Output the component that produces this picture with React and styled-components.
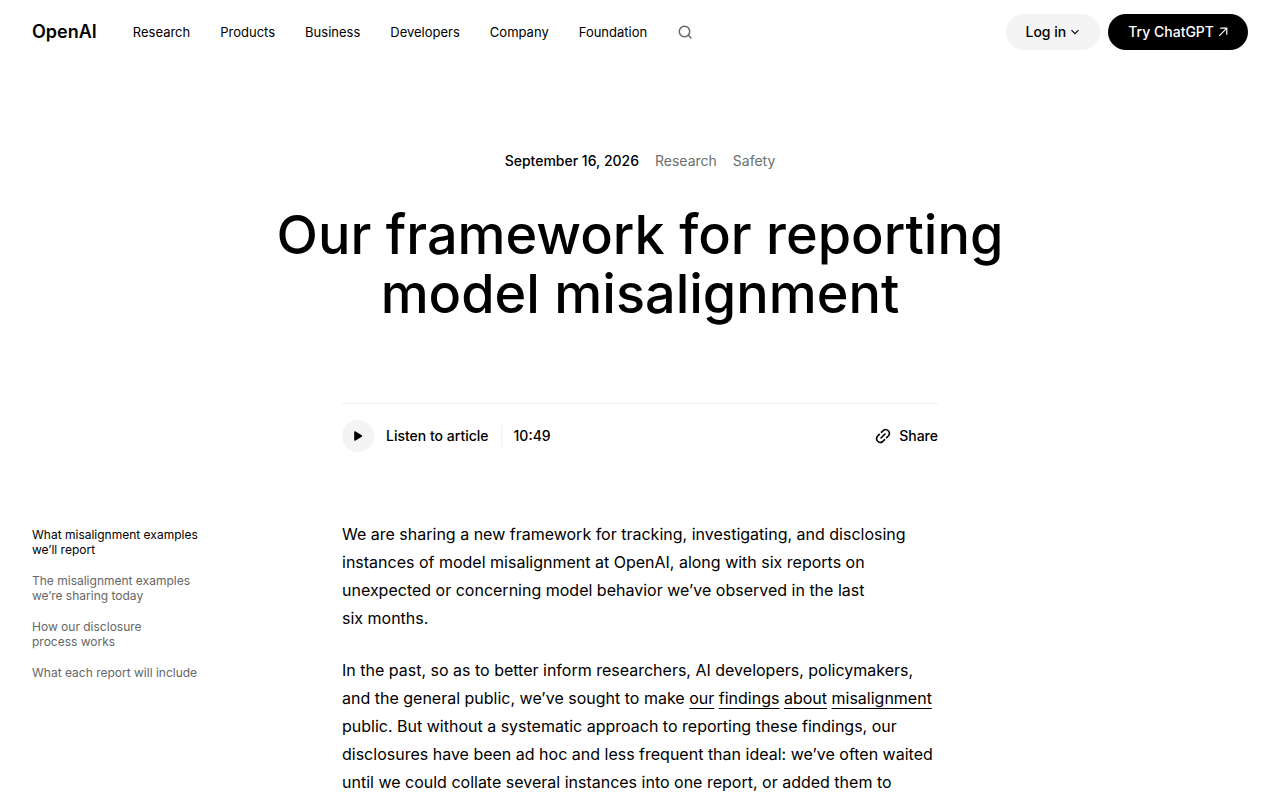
import styled, { createGlobalStyle } from "styled-components";

const GlobalStyle = createGlobalStyle`
  * {
    box-sizing: border-box;
    margin: 0;
    padding: 0;
  }

  body {
    background-color: #fff;
    color: #000;
    font-family: Inter, "Liberation Sans", sans-serif;
  }

  a {
    color: inherit;
    text-decoration: none;
  }

  button {
    border: none;
    background: none;
    color: inherit;
    font: inherit;
    cursor: pointer;
  }
`;

const Header = styled.header`
  display: flex;
  align-items: center;
  height: 64px;
  padding: 0 32px;
`;

const Logo = styled.a`
  margin-right: 36px;
  font-size: 18px;
  line-height: 24px;
  font-weight: 600;
`;

const Nav = styled.nav`
  display: flex;
  align-items: center;
  gap: 30px;
  font-size: 13px;
  line-height: 20px;
`;

const SearchButton = styled.button`
  display: flex;
  color: #666;
`;

const Actions = styled.div`
  display: flex;
  gap: 8px;
  margin-left: auto;
`;

const Pill = styled.button`
  display: flex;
  align-items: center;
  gap: 4px;
  height: 36px;
  padding: 0 20px;
  border-radius: 18px;
  background-color: ${({ $dark }) => ($dark ? "#000" : "#f4f4f4")};
  color: ${({ $dark }) => ($dark ? "#fff" : "#000")};
  font-size: 14px;
  line-height: 20px;
  font-weight: 500;
`;

const Hero = styled.section`
  display: flex;
  flex-direction: column;
  align-items: center;
  gap: 34px;
  padding: 87px 32px 80px;
  text-align: center;
`;

const Meta = styled.div`
  display: flex;
  gap: 16px;
  font-size: 14px;
  line-height: 20px;

  & time {
    font-weight: 500;
  }

  & a {
    color: #6b706b;
  }
`;

const Title = styled.h1`
  max-width: 800px;
  font-size: 54px;
  line-height: 59px;
  font-weight: 500;
  text-wrap: balance;
`;

const Columns = styled.div`
  display: grid;
  grid-template-columns: minmax(0, 1fr) minmax(0, 596px) minmax(0, 1fr);
  padding: 0 32px;
`;

const Player = styled.div`
  grid-column: 2;
  display: flex;
  align-items: center;
  justify-content: space-between;
  height: 65px;
  margin-bottom: 52px;
  border-top: 1px solid #f1f1f1;
  font-size: 14px;
  line-height: 20px;
  font-weight: 500;
`;

const Listen = styled.button`
  display: flex;
  align-items: center;
  gap: 12px;
`;

const PlayCircle = styled.span`
  display: flex;
  align-items: center;
  justify-content: center;
  width: 32px;
  height: 32px;
  border-radius: 50%;
  background-color: #f4f4f4;
`;

const Duration = styled.span`
  padding-left: 12px;
  border-left: 1px solid #f1f1f1;
`;

const Share = styled.button`
  display: flex;
  align-items: center;
  gap: 8px;
`;

const Toc = styled.nav`
  grid-column: 1;
  display: flex;
  flex-direction: column;
  gap: 16px;
  max-width: 180px;
  padding-top: 7px;
  font-size: 12px;
  line-height: 15px;
`;

const TocLink = styled.a`
  color: ${({ $active }) => ($active ? "#000" : "#666")};
`;

const Article = styled.article`
  display: flex;
  flex-direction: column;
  gap: 24px;
  font-size: 16px;
  line-height: 28px;

  & a {
    text-decoration: underline;
    text-decoration-thickness: 1px;
    text-underline-offset: 4px;
    text-decoration-skip-ink: none;
  }
`;

const navItems = ["Research", "Products", "Business", "Developers", "Company", "Foundation"];

const App = () => {
  return (
    <>
      <GlobalStyle />
      <Header>
        <Logo href="#">OpenAI</Logo>
        <Nav>
          {navItems.map((item) => (
            <a href="#" key={item}>{item}</a>
          ))}
          <SearchButton aria-label="Search">
            <svg width="16" height="16" viewBox="0 0 16 16" fill="none" stroke="currentColor" strokeWidth="1.5">
              <circle cx="7.5" cy="7.5" r="5.2" />
              <path d="M11.3 11.3 14 14" strokeLinecap="round" />
            </svg>
          </SearchButton>
        </Nav>
        <Actions>
          <Pill>
            Log in
            <svg width="10" height="10" viewBox="0 0 10 10" fill="none" stroke="currentColor" strokeWidth="1.1">
              <path d="M1.5 3.2 5 6.7l3.5-3.5" />
            </svg>
          </Pill>
          <Pill as="a" href="#" $dark>
            Try ChatGPT
            <svg width="10" height="10" viewBox="0 0 10 10" fill="none" stroke="currentColor" strokeWidth="1.2">
              <path d="M1.2 8.8 8.6 1.4M2.2 1.2h6.6v6.6" />
            </svg>
          </Pill>
        </Actions>
      </Header>
      <main>
        <Hero>
          <Meta>
            <time dateTime="2026-09-16">September 16, 2026</time>
            <a href="#">Research</a>
            <a href="#">Safety</a>
          </Meta>
          <Title>Our framework for reporting model misalignment</Title>
        </Hero>
        <Columns>
          <Player>
            <Listen>
              <PlayCircle>
                <svg width="10" height="10" viewBox="0 0 10 10">
                  <path d="M1.2 1.3v7.4c0 .8.8 1.2 1.5.8l6-3.7c.6-.4.6-1.2 0-1.6l-6-3.7C2 .1 1.2.5 1.2 1.3Z" />
                </svg>
              </PlayCircle>
              Listen to article
              <Duration>10:49</Duration>
            </Listen>
            <Share>
              <svg width="16" height="16" viewBox="0 0 16 16" fill="none" stroke="currentColor" strokeWidth="1.6" strokeLinecap="round">
                <path d="M6 10l4-4" />
                <path d="M6.4 4.3 8.3 2.5a3.7 3.7 0 0 1 5.2 5.2l-1.8 1.9" />
                <path d="M9.6 11.7 7.7 13.5a3.7 3.7 0 0 1-5.2-5.2l1.8-1.9" />
              </svg>
              Share
            </Share>
          </Player>
          <Toc aria-label="Table of contents">
            <TocLink href="#" $active>What misalignment examples we’ll report</TocLink>
            <TocLink href="#">The misalignment examples we’re sharing today</TocLink>
            <TocLink href="#">How our disclosure<br />process works</TocLink>
            <TocLink href="#">What each report will include</TocLink>
          </Toc>
          <Article>
            <p>
              We are sharing a new framework for tracking, investigating, and disclosing
              instances of model misalignment at OpenAI, along with six reports on
              unexpected or concerning model behavior we’ve observed in the last
              six&nbsp;months.
            </p>
            <p>
              In the past, so as to better inform researchers, AI developers, policymakers,
              and the general public, we’ve sought to make <a href="#">our</a>{" "}
              <a href="#">findings</a> <a href="#">about</a> <a href="#">misalignment</a>{" "}
              public. But without a systematic approach to reporting these findings, our
              disclosures have been ad hoc and less frequent than ideal: we’ve often waited
              until we could collate several instances into one report, or added them to
            </p>
          </Article>
        </Columns>
      </main>
    </>
  );
};

export default App;
